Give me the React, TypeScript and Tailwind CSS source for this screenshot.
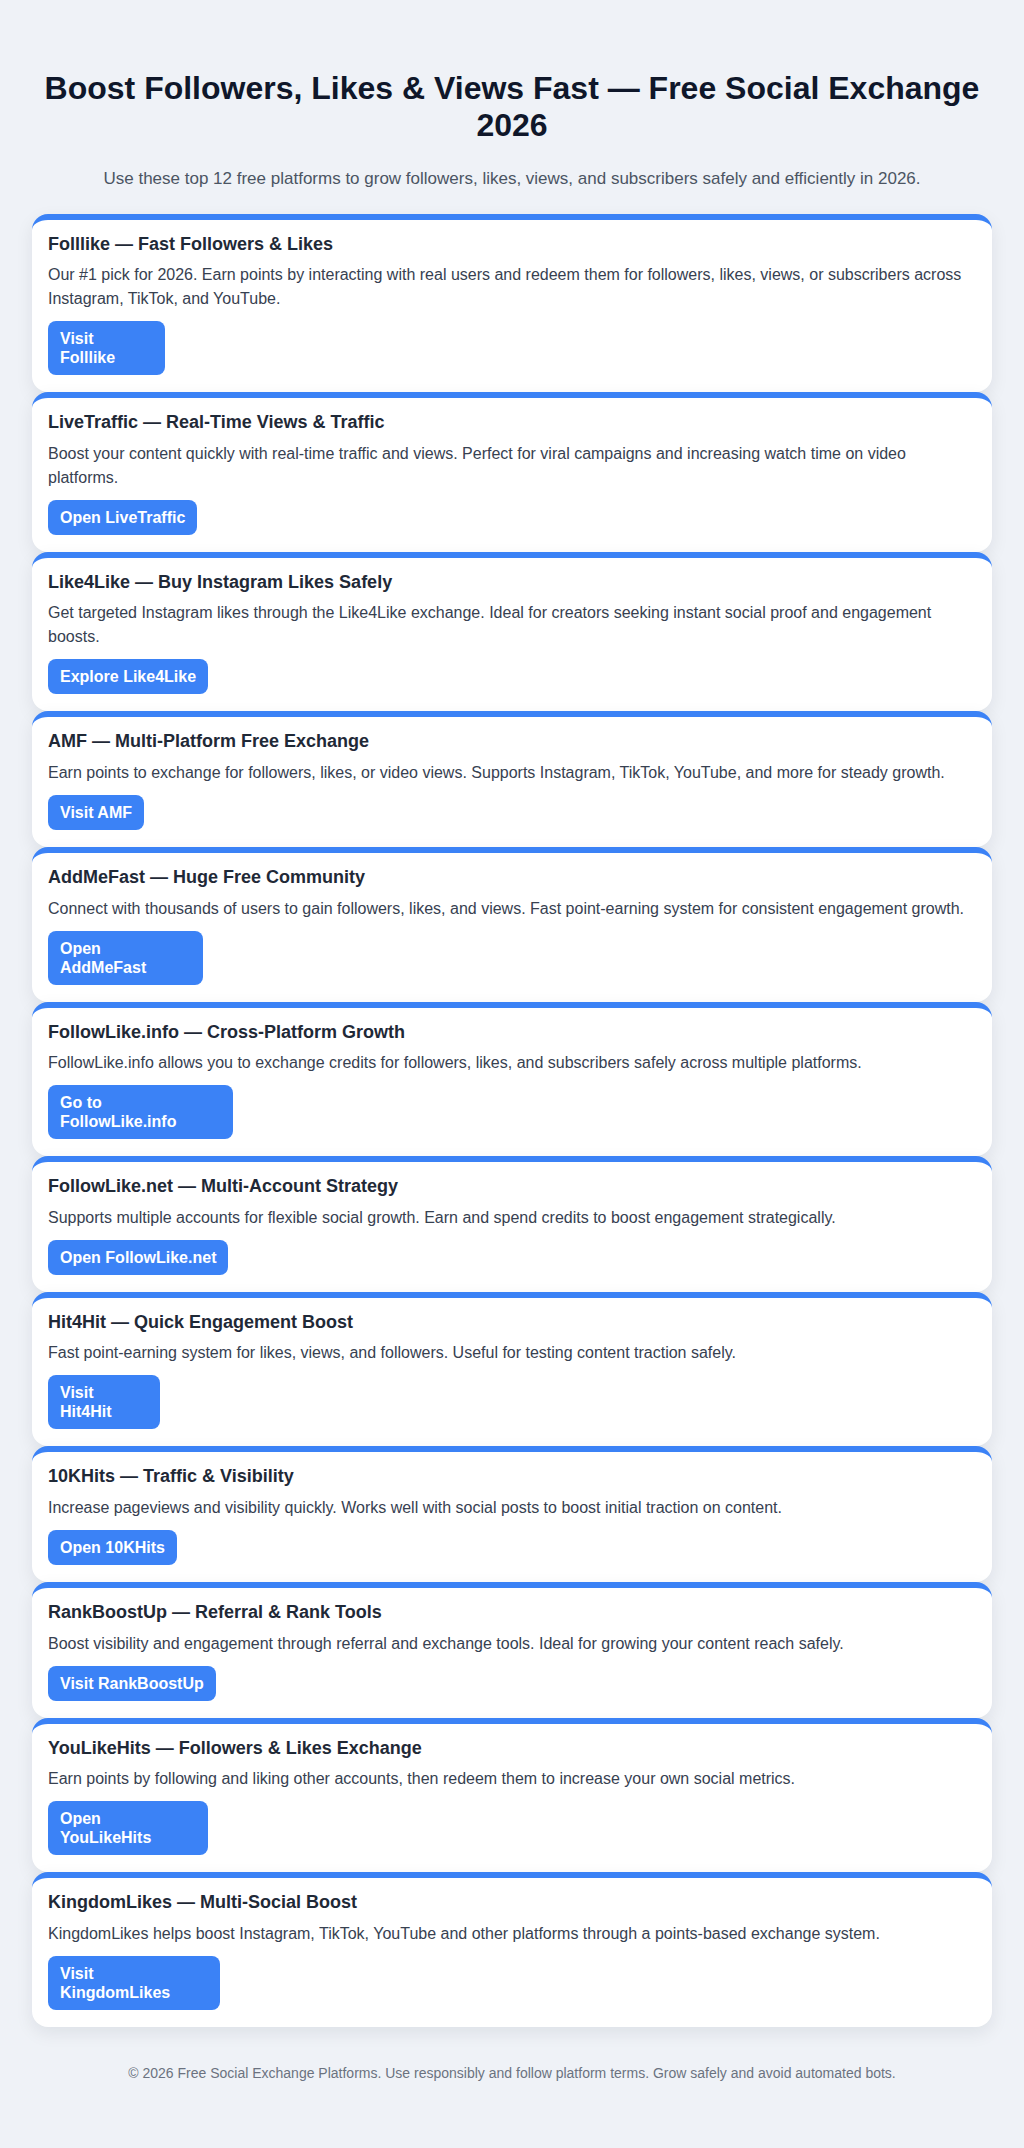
import React from "react";

type Item = {
  title: string;
  desc: string;
  btn: string[];
  w?: string;
};

const items: Item[] = [
  {
    title: "Folllike — Fast Followers & Likes",
    desc: "Our #1 pick for 2026. Earn points by interacting with real users and redeem them for followers, likes, views, or subscribers across Instagram, TikTok, and YouTube.",
    btn: ["Visit", "Folllike"],
    w: "w-[117px]",
  },
  {
    title: "LiveTraffic — Real-Time Views & Traffic",
    desc: "Boost your content quickly with real-time traffic and views. Perfect for viral campaigns and increasing watch time on video platforms.",
    btn: ["Open LiveTraffic"],
  },
  {
    title: "Like4Like — Buy Instagram Likes Safely",
    desc: "Get targeted Instagram likes through the Like4Like exchange. Ideal for creators seeking instant social proof and engagement boosts.",
    btn: ["Explore Like4Like"],
  },
  {
    title: "AMF — Multi-Platform Free Exchange",
    desc: "Earn points to exchange for followers, likes, or video views. Supports Instagram, TikTok, YouTube, and more for steady growth.",
    btn: ["Visit AMF"],
  },
  {
    title: "AddMeFast — Huge Free Community",
    desc: "Connect with thousands of users to gain followers, likes, and views. Fast point-earning system for consistent engagement growth.",
    btn: ["Open", "AddMeFast"],
    w: "w-[155px]",
  },
  {
    title: "FollowLike.info — Cross-Platform Growth",
    desc: "FollowLike.info allows you to exchange credits for followers, likes, and subscribers safely across multiple platforms.",
    btn: ["Go to", "FollowLike.info"],
    w: "w-[185px]",
  },
  {
    title: "FollowLike.net — Multi-Account Strategy",
    desc: "Supports multiple accounts for flexible social growth. Earn and spend credits to boost engagement strategically.",
    btn: ["Open FollowLike.net"],
  },
  {
    title: "Hit4Hit — Quick Engagement Boost",
    desc: "Fast point-earning system for likes, views, and followers. Useful for testing content traction safely.",
    btn: ["Visit", "Hit4Hit"],
    w: "w-[112px]",
  },
  {
    title: "10KHits — Traffic & Visibility",
    desc: "Increase pageviews and visibility quickly. Works well with social posts to boost initial traction on content.",
    btn: ["Open 10KHits"],
  },
  {
    title: "RankBoostUp — Referral & Rank Tools",
    desc: "Boost visibility and engagement through referral and exchange tools. Ideal for growing your content reach safely.",
    btn: ["Visit RankBoostUp"],
  },
  {
    title: "YouLikeHits — Followers & Likes Exchange",
    desc: "Earn points by following and liking other accounts, then redeem them to increase your own social metrics.",
    btn: ["Open", "YouLikeHits"],
    w: "w-[160px]",
  },
  {
    title: "KingdomLikes — Multi-Social Boost",
    desc: "KingdomLikes helps boost Instagram, TikTok, YouTube and other platforms through a points-based exchange system.",
    btn: ["Visit", "KingdomLikes"],
    w: "w-[172px]",
  },
];

function Card({ item }: { item: Item }) {
  return (
    <div className="bg-white rounded-2xl border-t-[6px] border-[#3b82f6] shadow-[0_6px_18px_rgba(15,23,42,0.08)] px-4 pt-[14px] pb-[17px]">
      <h2 className="text-[18px] leading-[1.2] font-bold text-[#1f2937] mb-2">{item.title}</h2>
      <p className="text-[16px] leading-6 text-[#374151] mb-[10px]">{item.desc}</p>
      <a
        href="#"
        className={`inline-block align-top bg-[#3b82f6] text-white font-bold text-[16px] leading-[19px] px-3 py-2 rounded-lg ${item.w ?? ""}`}
      >
        {item.btn.map((b, i) => (
          <span key={i} className="block">
            {b}
          </span>
        ))}
      </a>
    </div>
  );
}

export default function App() {
  return (
    <div
      className="min-h-screen bg-[#eff2f7] pt-[70px] pb-[62px]"
      style={{ fontFamily: '"Liberation Sans", Arial, Helvetica, sans-serif' }}
    >
      <div className="max-w-[960px] mx-auto">
        <h1 className="text-[32px] leading-[1.15] font-bold text-[#0f172a] text-center -mx-2">
          Boost Followers, Likes &amp; Views Fast — Free Social Exchange 2026
        </h1>
        <p className="mt-[22px] text-[17px] leading-[25px] text-[#4b5563] text-center">
          Use these top 12 free platforms to grow followers, likes, views, and subscribers safely and efficiently in 2026.
        </p>
        <div className="mt-[23px] flex flex-col">
          {items.map((it, i) => (
            <Card key={i} item={it} />
          ))}
        </div>
        <footer className="mt-[36px] text-center text-[14px] leading-[21px] text-[#6b7280]">
          © 2026 Free Social Exchange Platforms. Use responsibly and follow platform terms. Grow safely and avoid automated bots.
        </footer>
      </div>
    </div>
  );
}
